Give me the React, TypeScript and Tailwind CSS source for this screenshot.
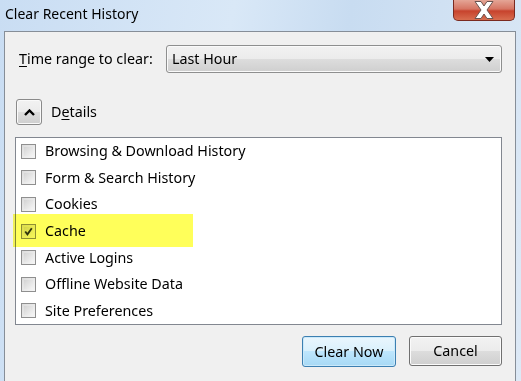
import { Fragment } from "react";

const items = [
  { label: "Browsing & Download History", checked: false },
  { label: "Form & Search History", checked: false },
  { label: "Cookies", checked: false },
  { label: "Cache", checked: true },
  { label: "Active Logins", checked: false },
  { label: "Offline Website Data", checked: false },
  { label: "Site Preferences", checked: false },
];

const font = "font-['Segoe_UI','Noto_Sans',sans-serif]";

const CheckBox = ({ checked }: { checked: boolean }) => (
  <span className="w-[15px] h-[15px] border border-[#8f8f8f] bg-[linear-gradient(135deg,#dcdcdc_0%,#f6f6f6_100%)] p-[2px] flex items-center justify-center">
    <span className="w-full h-full bg-[linear-gradient(135deg,#d4d4d4_0%,#f4f4f4_100%)] flex items-center justify-center">
      {checked && (
        <svg width="11" height="11" viewBox="0 0 11 11">
          <path d="M1.5 5.5 L4.2 9 L9.5 1.5" fill="none" stroke="#2f3424" strokeWidth="2.2" />
        </svg>
      )}
    </span>
  </span>
);

const App = () => {
  return (
    <div
      className={`relative w-[521px] h-[381px] overflow-hidden bg-[linear-gradient(100deg,#c9ddf3_0%,#d9e8f7_40%,#c8dcf1_60%,#dde9f6_100%)] text-[14.3px] text-black ${font}`}
    >
      {/* title bar */}
      <div className="h-[31px] flex items-center pl-[5px] pb-[3px]">
        <span className="text-[14px] leading-none">Clear Recent History</span>
      </div>
      <div className="absolute top-0 right-[6px] w-[62px] h-[21px] rounded-b-[5px] border border-t-0 border-[#7a2a20] bg-[linear-gradient(180deg,#e4a596_0%,#d67563_45%,#c7432d_55%,#d86d4f_100%)] flex items-center justify-center">
        <svg width="26" height="18" viewBox="0 0 26 18">
          <path
            d="M4 0.5 H10 L13 5 L16 0.5 H22 L16 9 L22 17.5 H16 L13 13 L10 17.5 H4 L10 9 Z"
            fill="#ffffff"
            stroke="#6b5450"
            strokeWidth="1"
          />
        </svg>
      </div>

      {/* dialog body */}
      <div className="ml-[4px] w-[512px] h-[360px] border border-[#868e98] bg-[#f0f0f0] pt-[13px] pl-[10px] pr-[13px]">
        <div className="flex items-center h-[28px]">
          <span className="ml-[4px] w-[147px]">
            <span className="underline underline-offset-2">T</span>ime range to clear:
          </span>
          <div className="flex-1 h-[28px] rounded-[3px] border border-[#8e8f8f] bg-[linear-gradient(180deg,#f2f2f2_0%,#ebebeb_50%,#dddddd_50%,#cfcfcf_100%)] flex items-center pl-[5px] pr-[7px] shadow-[inset_0_0_0_1px_#fafafa]">
            <span className="flex-1">Last Hour</span>
            <svg width="9" height="5" viewBox="0 0 9 5">
              <path d="M0 0 H9 L4.5 5 Z" fill="#000000" />
            </svg>
          </div>
        </div>

        <div className="flex items-center mt-[26px] h-[26px]">
          <button className="ml-[1px] w-[26px] h-[26px] rounded-[3px] border border-[#8a8a8a] bg-[linear-gradient(180deg,#f2f2f2_0%,#ebebeb_50%,#dddddd_50%,#cfcfcf_100%)] flex items-center justify-center shadow-[inset_0_0_0_1px_#fafafa]">
            <svg width="11" height="7" viewBox="0 0 11 7">
              <path d="M1 6 L5.5 1.5 L10 6" fill="none" stroke="#000000" strokeWidth="2.4" />
            </svg>
          </button>
          <span className="ml-[9px]">
            D<span className="underline underline-offset-2">e</span>tails
          </span>
        </div>

        <div className="mt-[12px] h-[188px] border border-[#828790] bg-white flex flex-col">
          {items.map((it) => (
            <Fragment key={it.label}>
              <div className="h-[26.6px] flex items-center pl-[5px] gap-[9px] shrink-0">
                <CheckBox checked={it.checked} />
                <span className="leading-none">{it.label}</span>
              </div>
            </Fragment>
          ))}
        </div>

        <div className="flex justify-end gap-[13px] mt-[11px]">
          <button className="w-[94px] h-[31px] rounded-[3px] border border-[#3c7fb1] bg-[linear-gradient(180deg,#eaf6fd_0%,#d9f0fc_50%,#bee6fd_50%,#a7d9f5_100%)] shadow-[inset_0_0_0_1px_#cbe9fa]">
            Clear Now
          </button>
          <button className="w-[93px] h-[30px] rounded-[3px] border border-[#707070] bg-[linear-gradient(180deg,#f2f2f2_0%,#ebebeb_50%,#dddddd_50%,#cfcfcf_100%)] shadow-[inset_0_0_0_1px_#fbfbfb]">
            Cancel
          </button>
        </div>
      </div>

      {/* highlighter mark over the Cache row */}
      <div className="absolute left-[13px] top-[214px] w-[180px] h-[33px] bg-[#ffff5a] mix-blend-multiply" />
    </div>
  );
};

export default App;
